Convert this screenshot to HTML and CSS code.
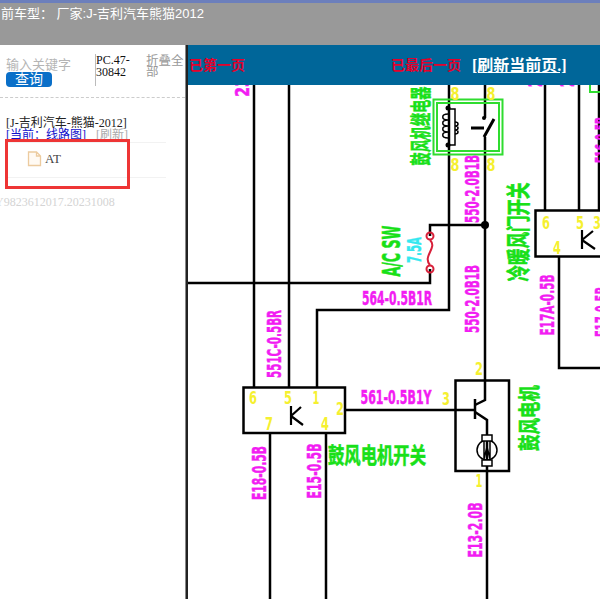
FILE: index.html
```html
<!DOCTYPE html>
<html lang="zh-CN">
<head>
	<meta charset="UTF-8">
	<title>线路图</title>
	<link rel="stylesheet" href="styles.css">
</head>
<body>
<div class="topbar">
	<p class="car">前车型： 厂家:J-吉利汽车熊猫2012</p>
</div>
<div class="main">
	<div class="side">
		<div class="search">
			<div class="keyword">
				<p class="hint">输入关键字</p>
				<p class="btn">查询</p>
			</div>
			<p class="code">PC.47-30842</p>
			<p class="fold">折叠全部</p>
		</div>
		<div class="tree">
			<p class="model">[J-吉利汽车-熊猫-2012]</p>
			<p class="current"><span class="cur">[当前：线路图]</span><span class="refresh">[刷新]</span></p>
			<div class="node">
				<svg class="doc" width="15" height="16" viewBox="0 0 15 16">
					<path d="M1.5 1h8l4 4v9.500h-12z M9.500 1v4h4" fill="#fffaf3" stroke="#eccb9f" stroke-width="1.300"/>
				</svg>
				<span>AT</span>
			</div>
			<p class="ver">Y9823612017.20231008</p>
		</div>
		<div class="mark"></div>
	</div>
	<div class="content">
		<div class="bar">
			<span class="msg first">已第一页</span>
			<span class="msg last">已最后一页</span>
			<a class="reload">[刷新当前页.]</a>
		</div>
		<svg class="chart" width="412" height="514" viewBox="188 85 412 514">
			<g class="wire">
				<path d="M254 85V387M289 85V387M317 387V310H449V85"/>
				<path d="M485 85V118M485 137V380M485 380V400L475 405M475 412L487 420V599"/>
				<path d="M485 225H430V236M430 269V283H188"/>
				<path d="M270 433V599M326 433V599M345 410H475"/>
				<path d="M545 85V210M579 85V210M599 85V210M559 256V368H600"/>
				<path d="M475 399V419"/>
				<rect x="243.500" y="387.500" width="101.500" height="45.500"/>
				<rect x="455.500" y="380.500" width="53.500" height="90.500"/>
				<rect x="535.500" y="210.500" width="70" height="46"/>
			</g>
			<!-- K contacts -->
			<g class="thin">
				<path class="bold" d="M291 406V425M291 416L301 407M291 416L303 425"/>
				<path class="bold" d="M582 230V249M582 240L593 231M582 240L595 249"/>
				<path d="M448 109H455V145H448M448 114C441 114 441 120 448 120C441 120 441 126 448 126C441 126 441 132 448 132C441 132 441 138 448 138"/>
				<path d="M455 122C459 122 459 126 455 126C459 126 459 130 455 130C459 130 459 134 455 134"/>
				<circle cx="487" cy="450" r="10"/>
				<rect x="482" y="435" width="10" height="6" fill="#fff"/>
				<rect x="482" y="460" width="10" height="6" fill="#fff"/>
				<path d="M484 441V459L487 447L490 459V441"/>
			</g>
			<circle cx="485" cy="225" r="4"/>
			<circle cx="448" cy="108" r="2.500"/>
			<circle cx="448" cy="145" r="2.500"/>
			<circle cx="484" cy="118" r="2"/>
			<path class="heavy" d="M471 128H484M494 119L484 137"/>
			<g class="relay">
				<rect x="433.500" y="99.500" width="69" height="55"/>
				<rect x="437" y="103" width="62" height="48"/>
				<path d="M590 85V92H600"/>
			</g>
			<g class="fuse">
				<circle cx="430" cy="236" r="3.500"/>
				<circle cx="430" cy="269" r="3.500"/>
				<path d="M430 240C438 248 422 256 430 265"/>
			</g>
			<g class="pink">
				<text transform="translate(274 344) rotate(-90)" textLength="68" lengthAdjust="spacingAndGlyphs">551C-0.5BR</text>
				<text transform="translate(259 473) rotate(-90)" textLength="54" lengthAdjust="spacingAndGlyphs">E18-0.5B</text>
				<text transform="translate(314 471) rotate(-90)" textLength="55" lengthAdjust="spacingAndGlyphs">E15-0.5B</text>
				<text transform="translate(472 189) rotate(-90)" textLength="68" lengthAdjust="spacingAndGlyphs">550-2.0B1B</text>
				<text transform="translate(472 299) rotate(-90)" textLength="68" lengthAdjust="spacingAndGlyphs">550-2.0B1B</text>
				<text transform="translate(475 530) rotate(-90)" textLength="55" lengthAdjust="spacingAndGlyphs">E13-2.0B</text>
				<text transform="translate(547 305) rotate(-90)" textLength="61" lengthAdjust="spacingAndGlyphs">E17A-0.5B</text>
				<text transform="translate(602 312) rotate(-90)" textLength="50" lengthAdjust="spacingAndGlyphs">E17-0.5B</text>
				<text transform="translate(602 140) rotate(-90)" textLength="46" lengthAdjust="spacingAndGlyphs">E16-0.5B</text>
				<text transform="translate(242 87) rotate(-90)" textLength="20" lengthAdjust="spacingAndGlyphs">23</text>
				<text transform="translate(535 80) rotate(-90)" textLength="14" lengthAdjust="spacingAndGlyphs">23</text>
				<text transform="translate(567 80) rotate(-90)" textLength="14" lengthAdjust="spacingAndGlyphs">23</text>
				<text x="396" y="397" textLength="71" lengthAdjust="spacingAndGlyphs">561-0.5B1Y</text>
				<text x="397" y="298" textLength="70" lengthAdjust="spacingAndGlyphs">564-0.5B1R</text>
			</g>
			<g class="pin">
				<text x="253" y="397" textLength="8" lengthAdjust="spacingAndGlyphs">6</text>
				<text x="288" y="397" textLength="8" lengthAdjust="spacingAndGlyphs">5</text>
				<text x="316" y="397" textLength="7" lengthAdjust="spacingAndGlyphs">1</text>
				<text x="340" y="408" textLength="8" lengthAdjust="spacingAndGlyphs">2</text>
				<text x="269" y="423" textLength="8" lengthAdjust="spacingAndGlyphs">7</text>
				<text x="325" y="423" textLength="8" lengthAdjust="spacingAndGlyphs">4</text>
				<text x="479" y="368" textLength="8" lengthAdjust="spacingAndGlyphs">2</text>
				<text x="446" y="398" textLength="8" lengthAdjust="spacingAndGlyphs">3</text>
				<text x="479" y="480" textLength="7" lengthAdjust="spacingAndGlyphs">1</text>
				<text x="546" y="222" textLength="8" lengthAdjust="spacingAndGlyphs">6</text>
				<text x="580" y="222" textLength="8" lengthAdjust="spacingAndGlyphs">5</text>
				<text x="597" y="222" textLength="8" lengthAdjust="spacingAndGlyphs">3</text>
				<text x="557" y="247" textLength="8" lengthAdjust="spacingAndGlyphs">4</text>
				<text x="455" y="93" textLength="9" lengthAdjust="spacingAndGlyphs">8</text>
				<text x="491" y="93" textLength="9" lengthAdjust="spacingAndGlyphs">8</text>
				<text x="455" y="164" textLength="9" lengthAdjust="spacingAndGlyphs">8</text>
				<text x="491" y="164" textLength="9" lengthAdjust="spacingAndGlyphs">8</text>
			</g>
			<g class="green">
				<text class="relay-name" transform="translate(419 126) rotate(-90)" textLength="79" lengthAdjust="spacingAndGlyphs">鼓风机继电器</text>
				<text class="big" transform="translate(516 232) rotate(-90)" textLength="99" lengthAdjust="spacingAndGlyphs">冷暖风门开关</text>
				<text transform="translate(527 418) rotate(-90)" textLength="66" lengthAdjust="spacingAndGlyphs">鼓风电机</text>
				<text x="377" y="453" textLength="98" lengthAdjust="spacingAndGlyphs">鼓风电机开关</text>
				<text class="sw" transform="translate(392 251) rotate(-90)" textLength="51" lengthAdjust="spacingAndGlyphs">A/C SW</text>
			</g>
			<text class="amp" transform="translate(414 250) rotate(-90)" textLength="26" lengthAdjust="spacingAndGlyphs">7.5A</text>
		</svg>
	</div>
</div>
</body>
</html>
```

FILE: styles.css
```css
*{
	padding: 0;
	margin: 0;
	box-sizing: border-box;
}
html,body{
	width: 600px;
	height: 599px;
	overflow: hidden;
	background-color: #fff;
	font-family: "Liberation Serif", "Noto Sans CJK SC", serif;
}
.topbar{
	height: 45px;
	background-color: #999;
	border-top: 3px solid #6c7fbc;
	overflow: hidden;
}
.car{
	color: #fff;
	font-family: "Liberation Sans", "Noto Sans CJK SC", sans-serif;
	font-size: 13px;
	line-height: 22px;
	padding-left: 1px;
	white-space: nowrap;
}
.main{
	display: flex;
	height: 554px;
}
.side{
	width: 185px;
	flex: none;
	position: relative;
}
.search{
	height: 53px;
	display: flex;
	padding: 10px 0 0 6px;
	border-bottom: 1px dashed #ccc;
}
.keyword{
	width: 89px;
	padding-top: 2px;
}
.hint{
	color: #b5b5b5;
	font-size: 13px;
	line-height: 15px;
}
.btn{
	width: 46px;
	height: 15px;
	background-color: #0a6fc8;
	border-radius: 4px;
	color: #fff;
	font-size: 14px;
	line-height: 15px;
	text-align: center;
}
.code{
	width: 51px;
	height: 32px;
	margin-top: -1px;
	border-left: 1px solid #bbb;
	color: #111;
	font-size: 12px;
	line-height: 12px;
}
.fold{
	width: 38px;
	color: #999;
	font-size: 12.500px;
	line-height: 11px;
	margin-top: 1px;
}
.tree{
	padding: 19px 0 0 6px;
}
.model,.current{
	font-size: 12px;
	line-height: 12px;
	white-space: nowrap;
}
.model{
	color: #222;
}
.cur{
	color: #11c;
}
.refresh{
	margin-left: 10px;
	color: #aaa;
}
.node{
	width: 160px;
	height: 36px;
	margin-top: 1px;
	border-top: 1px solid #f2f2f2;
	border-bottom: 1px solid #f2f2f2;
	display: flex;
	align-items: center;
	gap: 3px;
	padding: 0 0 2px 21px;
	color: #444;
	font-size: 13px;
}
.ver{
	margin: 17px 0 0 -11px;
	color: #d4d4d4;
	font-size: 12px;
	line-height: 14px;
	white-space: nowrap;
}
.mark{
	position: absolute;
	left: 5px;
	top: 94px;
	width: 125px;
	height: 50px;
	border: 3px solid #ee3535;
}
.content{
	flex: 1;
	border-left: 1px solid #888;
	position: relative;
}
.content::before{
	content: "";
	position: absolute;
	left: 0;
	top: 0;
	bottom: 0;
	width: 2px;
	background-color: #222;
}
.bar{
	height: 40px;
	margin-left: 2px;
	background-color: #006699;
	display: flex;
	align-items: center;
	padding-bottom: 2px;
	font-weight: bold;
	font-size: 14px;
	white-space: nowrap;
}
.msg{
	color: #e4002b;
}
.first{
	width: 203px;
	padding-left: 1px;
}
.last{
	width: 81px;
}
.reload{
	color: #fff;
	font-size: 16px;
	text-decoration: underline;
}
.chart{
	display: block;
	margin-left: 2px;
}
.wire{
	fill: none;
	stroke: #000;
	stroke-width: 2.500;
}
.thin{
	fill: none;
	stroke: #000;
	stroke-width: 1.500;
}
.thin .bold{
	stroke-width: 2.200;
}
.heavy{
	fill: none;
	stroke: #000;
	stroke-width: 3;
}
.relay{
	fill: none;
	stroke: #2fdc2f;
	stroke-width: 2;
}
.fuse{
	fill: none;
	stroke: #d8203a;
	stroke-width: 2;
}
.pink text{
	fill: #f21cf2;
	stroke: #f21cf2;
	stroke-width: 0.500;
	font-family: "DejaVu Sans Condensed", "DejaVu Sans", sans-serif;
	font-size: 20px;
	font-weight: bold;
	text-anchor: middle;
	dominant-baseline: central;
}
.pin text{
	fill: #f5f030;
	font-family: "DejaVu Sans Condensed", "DejaVu Sans", sans-serif;
	font-size: 18px;
	font-weight: bold;
	text-anchor: middle;
	dominant-baseline: central;
}
.green text{
	fill: #18e018;
	stroke: #18e018;
	stroke-width: 0.600;
	font-family: "Noto Sans CJK SC", sans-serif;
	font-size: 22px;
	font-weight: bold;
	text-anchor: middle;
	dominant-baseline: central;
}
.green .big{
	font-size: 24px;
}
.green .relay-name{
	font-size: 21px;
}
.green .sw{
	font-family: "DejaVu Sans Condensed", "DejaVu Sans", sans-serif;
	font-size: 24px;
}
.amp{
	fill: #35e8f0;
	stroke: #35e8f0;
	stroke-width: 0.400;
	font-family: "DejaVu Sans Condensed", "DejaVu Sans", sans-serif;
	font-size: 20px;
	font-weight: bold;
	text-anchor: middle;
	dominant-baseline: central;
}
```
